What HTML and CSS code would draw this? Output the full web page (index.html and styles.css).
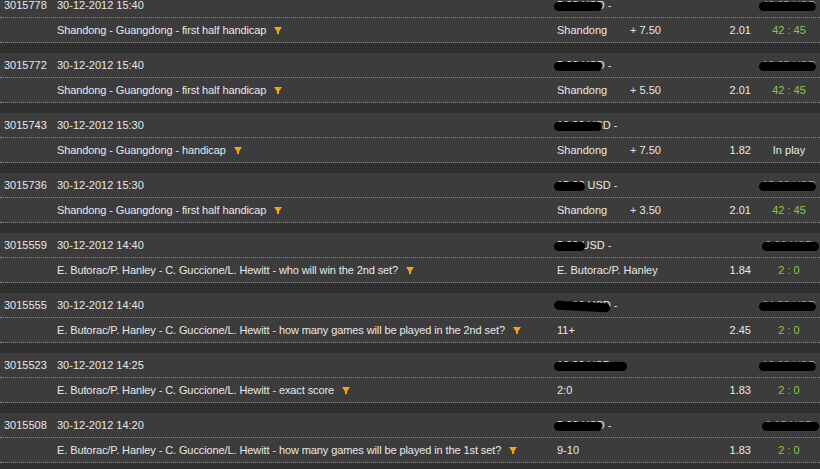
FILE: index.html
```html
<!DOCTYPE html>
<html lang="en">

<head>
    <meta charset="UTF-8">
    <meta name="viewport" content="width=device-width, initial-scale=1.0">
    <title>Bet history</title>
    <link rel="stylesheet" href="styles.css">
</head>

<body>
    <div class="list">

        <div class="bet">
            <div class="row head">
                <span class="id">3015778</span>
                <span class="date">30-12-2012 15:40</span>
                <span class="stake"><span class="hide">5.00 USD<i class="blob blob-m"></i></span> -</span>
                <span class="win"><span class="hide">42.95 USD<i class="blob blob-w"></i></span></span>
            </div>
            <div class="row line">
                <span></span>
                <span class="market">Shandong - Guangdong - first half handicap <svg class="arrow" viewBox="0 0 8 8"><path d="M0 0H8L5 4.5V7H3V4.5Z"/></svg></span>
                <span class="pick">Shandong</span>
                <span class="hcp">+ 7.50</span>
                <span class="odds">2.01</span>
                <span class="score green">42 : 45</span>
            </div>
        </div>

        <div class="bet">
            <div class="row head">
                <span class="id">3015772</span>
                <span class="date">30-12-2012 15:40</span>
                <span class="stake"><span class="hide">5.00 USD<i class="blob blob-m"></i></span> -</span>
                <span class="win"><span class="hide">12.95 USD<i class="blob blob-w"></i></span></span>
            </div>
            <div class="row line">
                <span></span>
                <span class="market">Shandong - Guangdong - first half handicap <svg class="arrow" viewBox="0 0 8 8"><path d="M0 0H8L5 4.5V7H3V4.5Z"/></svg></span>
                <span class="pick">Shandong</span>
                <span class="hcp">+ 5.50</span>
                <span class="odds">2.01</span>
                <span class="score green">42 : 45</span>
            </div>
        </div>

        <div class="bet">
            <div class="row head">
                <span class="id">3015743</span>
                <span class="date">30-12-2012 15:30</span>
                <span class="stake"><span class="hide">10.00 USD<i class="blob blob-m"></i></span> -</span>
                <span class="win"></span>
            </div>
            <div class="row line">
                <span></span>
                <span class="market">Shandong - Guangdong - handicap <svg class="arrow" viewBox="0 0 8 8"><path d="M0 0H8L5 4.5V7H3V4.5Z"/></svg></span>
                <span class="pick">Shandong</span>
                <span class="hcp">+ 7.50</span>
                <span class="odds">1.82</span>
                <span class="score">In play</span>
            </div>
        </div>

        <div class="bet">
            <div class="row head">
                <span class="id">3015736</span>
                <span class="date">30-12-2012 15:30</span>
                <span class="stake"><span class="hide">15.00 USD<i class="blob blob-s"></i></span> -</span>
                <span class="win"><span class="hide">15.00 USD<i class="blob blob-w"></i></span></span>
            </div>
            <div class="row line">
                <span></span>
                <span class="market">Shandong - Guangdong - first half handicap <svg class="arrow" viewBox="0 0 8 8"><path d="M0 0H8L5 4.5V7H3V4.5Z"/></svg></span>
                <span class="pick">Shandong</span>
                <span class="hcp">+ 3.50</span>
                <span class="odds">2.01</span>
                <span class="score green">42 : 45</span>
            </div>
        </div>

        <div class="bet">
            <div class="row head">
                <span class="id">3015559</span>
                <span class="date">30-12-2012 14:40</span>
                <span class="stake"><span class="hide">5.00 USD<i class="blob blob-s"></i></span> -</span>
                <span class="win"><span class="hide">9.20 USD<i class="blob blob-w"></i></span></span>
            </div>
            <div class="row line">
                <span></span>
                <span class="market">E. Butorac/P. Hanley - C. Guccione/L. Hewitt - who will win the 2nd set? <svg class="arrow" viewBox="0 0 8 8"><path d="M0 0H8L5 4.5V7H3V4.5Z"/></svg></span>
                <span class="pick wide">E. Butorac/P. Hanley</span>
                <span class="odds">1.84</span>
                <span class="score green">2 : 0</span>
            </div>
        </div>

        <div class="bet">
            <div class="row head">
                <span class="id">3015555</span>
                <span class="date">30-12-2012 14:40</span>
                <span class="stake"><span class="hide">10.00 USD -<i class="blob blob-l"></i></span></span>
                <span class="win"><span class="hide">24.50 USD<i class="blob blob-w"></i></span></span>
            </div>
            <div class="row line">
                <span></span>
                <span class="market">E. Butorac/P. Hanley - C. Guccione/L. Hewitt - how many games will be played in the 2nd set? <svg class="arrow" viewBox="0 0 8 8"><path d="M0 0H8L5 4.5V7H3V4.5Z"/></svg></span>
                <span class="pick wide">11+</span>
                <span class="odds">2.45</span>
                <span class="score green">2 : 0</span>
            </div>
        </div>

        <div class="bet">
            <div class="row head">
                <span class="id">3015523</span>
                <span class="date">30-12-2012 14:25</span>
                <span class="stake"><span class="hide">10.00 USD -<i class="blob blob-xl"></i></span></span>
                <span class="win"><span class="hide">18.30 USD<i class="blob blob-w"></i></span></span>
            </div>
            <div class="row line">
                <span></span>
                <span class="market">E. Butorac/P. Hanley - C. Guccione/L. Hewitt - exact score <svg class="arrow" viewBox="0 0 8 8"><path d="M0 0H8L5 4.5V7H3V4.5Z"/></svg></span>
                <span class="pick wide">2:0</span>
                <span class="odds">1.83</span>
                <span class="score green">2 : 0</span>
            </div>
        </div>

        <div class="bet">
            <div class="row head">
                <span class="id">3015508</span>
                <span class="date">30-12-2012 14:20</span>
                <span class="stake"><span class="hide">5.00 USD<i class="blob blob-m"></i></span> -</span>
                <span class="win"><span class="hide">9.15 USD<i class="blob blob-w"></i></span></span>
            </div>
            <div class="row line">
                <span></span>
                <span class="market">E. Butorac/P. Hanley - C. Guccione/L. Hewitt - how many games will be played in the 1st set? <svg class="arrow" viewBox="0 0 8 8"><path d="M0 0H8L5 4.5V7H3V4.5Z"/></svg></span>
                <span class="pick wide">9-10</span>
                <span class="odds">1.83</span>
                <span class="score green">2 : 0</span>
            </div>
        </div>

    </div>
</body>

</html>
```

FILE: styles.css
```css
body {
    margin: 0;
    background: #2f2f2f;
    color: #e8e8e8;
    font-family: "Liberation Sans", Arial, sans-serif;
    font-size: 11px;
    overflow: hidden;
}

.list {
    margin-top: -7px;
}

.bet {
    background: #3c3c3c;
    margin-bottom: 10px;
}

.row {
    display: grid;
    grid-template-columns: 53px 500px 73px 70px 51px 69px;
    padding-left: 4px;
    height: 24px;
    line-height: 24px;
    border-bottom: 1px dotted #8c8c8c;
    white-space: nowrap;
}

.line .market {
    letter-spacing: -0.1px;
}

.head .date {
    grid-column: 2;
}

.head .stake {
    grid-column: 3 / 6;
}

.head .win {
    grid-column: 6;
    text-align: center;
    padding-left: 7px;
    color: #8cc63f;
}

.hide {
    position: relative;
}

/* felt-pen marks over the amounts */
.blob {
    position: absolute;
    top: 50%;
    left: -3px;
    height: 9px;
    margin-top: -3px;
    background: #000;
    border-radius: 6px;
}

.blob-s {
    width: 31px;
}

.blob-m {
    width: 48px;
}

.blob-l {
    width: 56px;
    transform: rotate(3deg);
}

.blob-xl {
    width: 73px;
}

.blob-w {
    width: 57px;
}

.arrow {
    width: 8px;
    height: 8px;
    fill: #f6a317;
    margin-left: 5px;
    vertical-align: -1px;
}

.pick.wide {
    grid-column: 3 / 5;
}

.odds {
    text-align: right;
}

.score {
    text-align: center;
    padding-left: 7px;
}

.green {
    color: #8cc63f;
}
```
